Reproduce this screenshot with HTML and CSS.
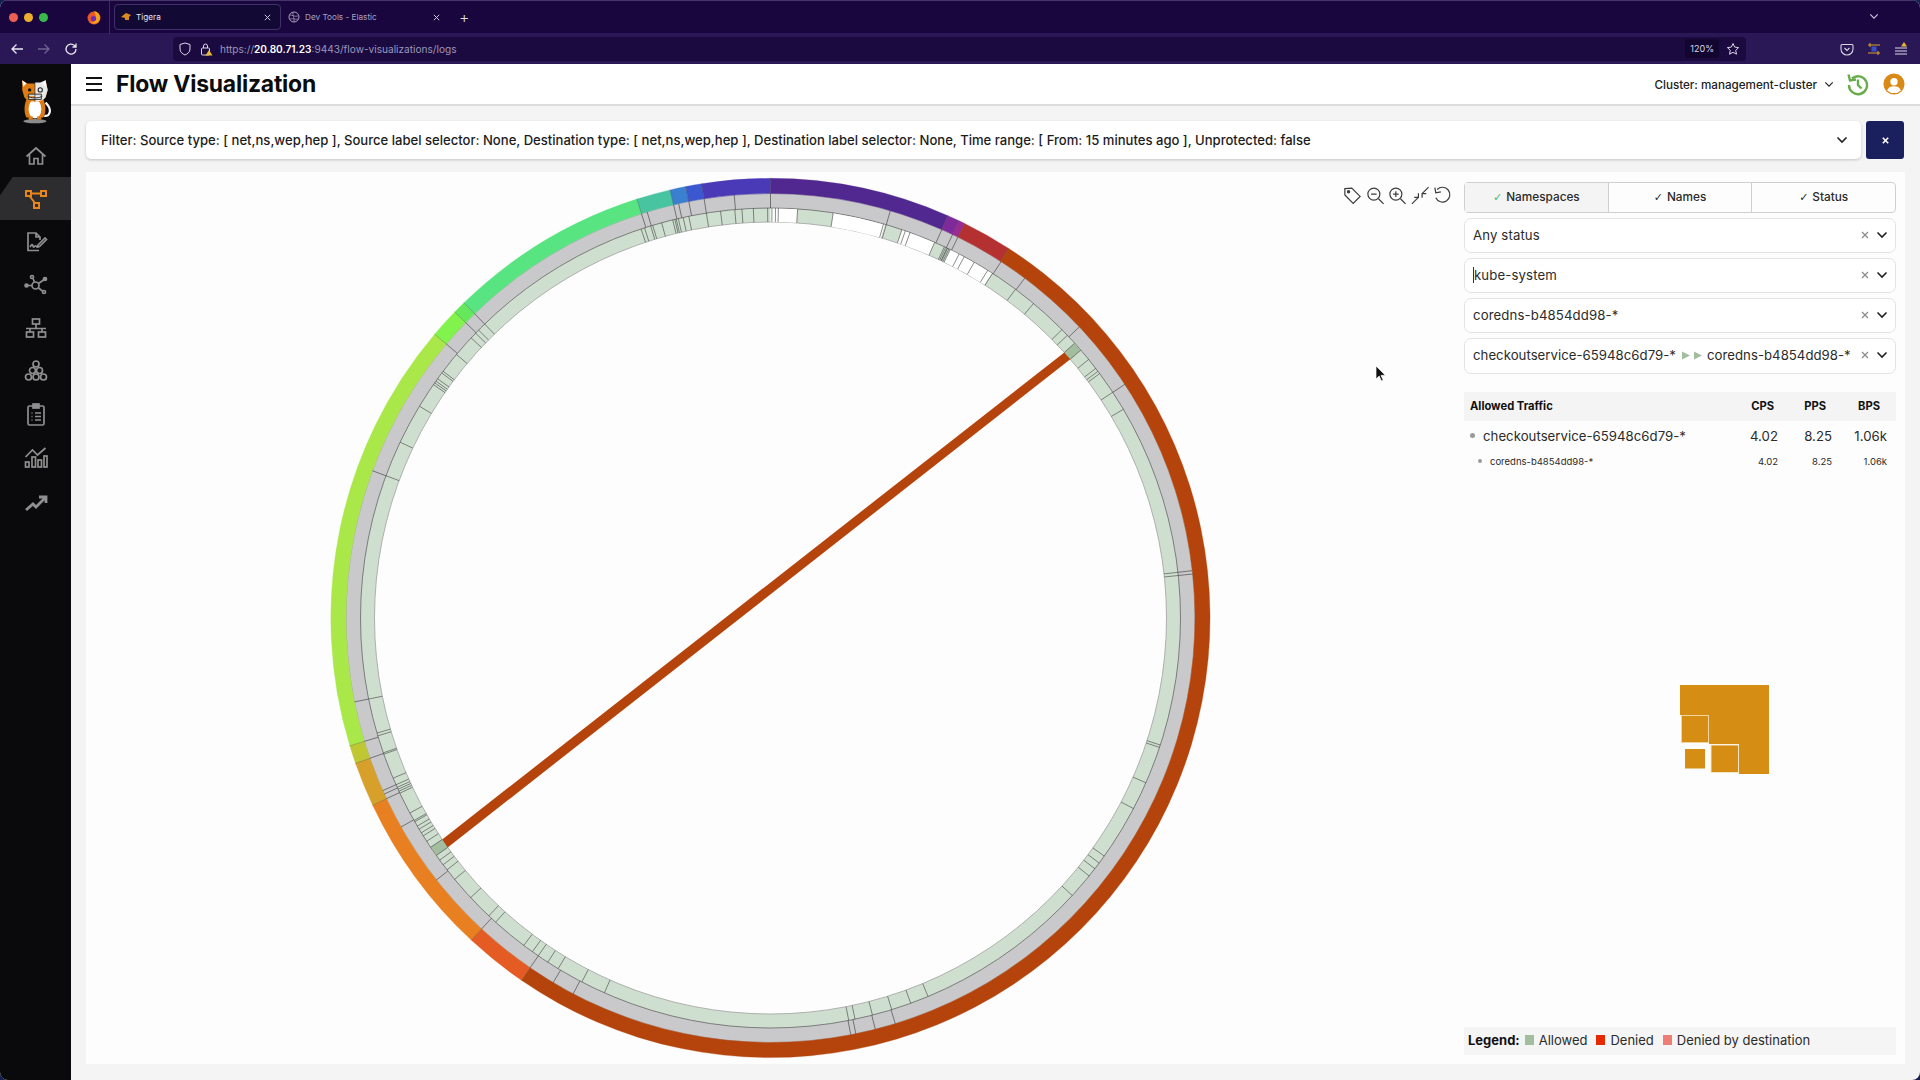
FILE: index.html
```html
<!DOCTYPE html>
<html lang="en">
<head>
<meta charset="utf-8">
<title>Tigera</title>
<link rel="stylesheet" href="styles.css">
</head>
<body>
<svg class="sprite" aria-hidden="true">
  <symbol id="i-x" viewBox="0 0 10 10"><path d="M2 2l6 6M8 2l-6 6"/></symbol>
  <symbol id="i-chev" viewBox="0 0 12 8"><path d="M1.5 1.5L6 6l4.5-4.5"/></symbol>
</svg>
<div class="window">
  <div class="tabbar">
    <div class="dots"><i class="dot red"></i><i class="dot yellow"></i><i class="dot green"></i></div>
    <div class="ff-slot">
      <svg class="ff" viewBox="0 0 16 16"><circle cx="8" cy="9" r="6.5" fill="#e8562a"/><path d="M8 2a7 7 0 0 1 6 7 6 6 0 0 1-11 3 4 4 0 0 0 7-3c0-2-1-5-2-7z" fill="#f6a21d"/><circle cx="7.5" cy="9.500" r="2.600" fill="#6b2fb5"/></svg>
    </div>
    <div class="tab active">
      <svg class="fav" viewBox="0 0 12 12"><path d="M1 6l5-4 5 2-2 2v3H5V7z" fill="#d88a1e"/></svg>
      <span class="tab-title">Tigera</span>
      <svg class="tab-x"><use href="#i-x"/></svg>
    </div>
    <div class="tab second">
      <svg class="fav" viewBox="0 0 12 12"><circle cx="6" cy="6" r="5" fill="none" stroke="#a9a3bd"/><path d="M2 4c3 0 4 2 8 1M2 8c3-1 5 1 8 0M5 1c-1 3 2 6 1 10" fill="none" stroke="#a9a3bd" stroke-width=".7"/></svg>
      <span class="tab-title dim">Dev Tools - Elastic</span>
      <svg class="tab-x"><use href="#i-x"/></svg>
    </div>
    <span class="new-tab">+</span>
    <svg class="tabs-chev"><use href="#i-chev"/></svg>
  </div>
  <div class="toolbar">
    <svg class="nav-ic" viewBox="0 0 16 16"><path d="M14 8H3M7.5 3.5L3 8l4.5 4.5"/></svg>
    <svg class="nav-ic off" viewBox="0 0 16 16"><path d="M2 8h11M8.500 3.500L13 8l-4.500 4.500"/></svg>
    <svg class="nav-ic" viewBox="0 0 16 16"><path d="M13 8a5 5 0 1 1-1.500-3.500L13 6M13 2.500V6H9.500"/></svg>
    <div class="urlbar">
      <svg class="url-ic" viewBox="0 0 14 14"><path d="M7 1l5 1.500V7c0 3-2.500 5-5 6-2.500-1-5-3-5-6V2.500z"/></svg>
      <svg class="url-ic" viewBox="0 0 14 14"><rect x="2.500" y="6" width="8" height="7" rx="1"/><path d="M4.500 6V4a2 2 0 0 1 4 0v2"/><path class="warn" d="M10 8l3.500 5.500h-7z"/></svg>
      <span class="url"><span class="dim2">https://</span><b>20.80.71.23</b><span class="dim2">:9443/flow-visualizations/logs</span></span>
      <span class="zoom-pct">120%</span>
      <svg class="url-ic star" viewBox="0 0 14 14"><path d="M7 1.500l1.700 3.600 3.900.5-2.900 2.700.8 3.900L7 10.300l-3.500 1.900.8-3.900-2.900-2.700 3.900-.5z"/></svg>
    </div>
    <svg class="tool-ic first" viewBox="0 0 14 14"><path d="M2 2.500h10a1 1 0 0 1 1 1V7a6 6 0 0 1-12 0V3.500a1 1 0 0 1 1-1z"/><path d="M4.500 6L7 8.500 9.500 6"/></svg>
    <svg class="tool-ic" viewBox="0 0 14 14"><path d="M1 3h12M1 11h12M3 1v4M11 9v4" stroke="#d9a02c"/><rect x="4.500" y="4.500" width="5" height="5" fill="#3a4fc0" stroke="none"/></svg>
    <svg class="tool-ic menu" viewBox="0 0 14 14"><path d="M1 6h12M1 9h12M1 12h12"/><path class="warn" d="M10 0l3 4.500H7z"/></svg>
  </div>
  <div class="app">
    <aside class="sidebar">
      <div class="logo">
        <svg viewBox="0 0 32 44" width="34" height="47">
          <ellipse cx="15" cy="41.500" rx="11" ry="2" fill="#8b8b8b"/>
          <path d="M25 24c4 4 5 8 3 11-1 1.500-3 2-4 1" fill="none" stroke="#fff" stroke-width="2"/>
          <path d="M8 19c-3 5-4 14-1 19h16c3-5 2-14-1-19z" fill="#de7a12"/>
          <ellipse cx="15" cy="30" rx="6" ry="9" fill="#fff"/>
          <path d="M3 3l5 3h12l5-3 2 9-2 7c-2 3-6 4-10 4s-8-1-10-4L3 12z" fill="#de7a12"/>
          <path d="M15 5h5l5-2 2 9-2 7c-2 3-6 4-10 4z" fill="#e8e8e8"/>
          <path d="M3 3l4 3-3 3zM25 3l-3 3 3 3z" fill="#fff"/>
          <circle cx="10" cy="12" r="1.600" fill="#111"/><circle cx="20" cy="12" r="2" fill="none" stroke="#222"/>
          <path d="M8 18c3 2 11 2 14 0M9 16h12v5H9z" fill="#ddd" stroke="#222" stroke-width=".8"/>
          <path d="M15 5v18" stroke="#222" stroke-width=".6"/>
          <rect x="9" y="37" width="4" height="3" fill="#de7a12"/><rect x="17" y="37" width="4" height="3" fill="#de7a12"/>
        </svg>
      </div>
      <nav class="nav">
        <a class="nav-item"><svg viewBox="0 0 24 24"><path d="M2.500 12.500L12 4l9.500 8.500M5.500 10.500V20H10v-5.500h4V20h4.500v-9.500"/></svg></a>
        <a class="nav-item current"><svg viewBox="0 0 24 24"><rect x="2" y="4" width="5" height="5"/><rect x="17" y="4" width="5" height="5"/><rect x="10" y="16" width="5" height="5"/><path d="M7 6.500h10M5.500 9l5.500 7"/></svg></a>
        <a class="nav-item"><svg viewBox="0 0 24 24"><path d="M15 20.500H4V3h8l4 4v3M12 3v4h4"/><path d="M6 17c2-3 2.500-3 3-1s1 1 2 0 1 1 3 1"/><path d="M14 15l7-7 1.500 1.500-7 7-2 .5z"/></svg></a>
        <a class="nav-item"><svg viewBox="0 0 24 24"><circle cx="11.500" cy="12.500" r="3.500"/><circle cx="8" cy="4" r="1.500"/><circle cx="21" cy="6" r="1.500" class="solid"/><circle cx="2.500" cy="12.500" r="1.500" class="solid"/><circle cx="20" cy="19" r="1.500"/><path d="M9 5.500l1.500 3.500M14.500 10.500l5-3.500M8 12.500H4M14.500 15l4 3"/></svg></a>
        <a class="nav-item"><svg viewBox="0 0 24 24"><rect x="8.500" y="3" width="7" height="5"/><rect x="2.500" y="16" width="7" height="5"/><rect x="14.500" y="16" width="7" height="5"/><path d="M12 8v4M2 12.500h20M6 12.500V16M18 12.500V16"/></svg></a>
        <a class="nav-item"><svg viewBox="0 0 24 24"><circle cx="12" cy="5" r="3"/><circle cx="8.500" cy="11.500" r="3"/><circle cx="15.500" cy="11.500" r="3"/><circle cx="4.500" cy="18" r="3"/><circle cx="12" cy="18" r="3"/><circle cx="19.500" cy="18" r="3"/></svg></a>
        <a class="nav-item"><svg viewBox="0 0 24 24"><rect x="4" y="4" width="16" height="19" rx="1.500"/><rect x="9" y="2" width="6" height="4" class="solid"/><path d="M7.500 11h1M11 11h6M7.500 14.500h1M11 14.500h6M7.500 18h1M11 18h6"/></svg></a>
        <a class="nav-item"><svg viewBox="0 0 24 24"><rect x="1.500" y="17" width="3.500" height="5"/><rect x="8" y="12" width="3.500" height="10"/><rect x="14" y="15" width="3.500" height="7"/><rect x="20" y="11" width="3" height="11"/><path d="M1.500 12l7-7 5 5 8-7"/></svg></a>
        <a class="nav-item last"><svg viewBox="0 0 24 24"><path class="thick" d="M2 19l7-6 3 3 9-9M15 6h7v6"/></svg></a>
      </nav>
    </aside>
    <main class="main">
      <header class="header">
        <div class="header-left">
          <div class="burger"><i></i><i></i><i></i></div>
          <h1 class="title">Flow Visualization</h1>
        </div>
        <div class="header-right">
          <span class="cluster">Cluster: management-cluster</span>
          <svg class="cluster-chev"><use href="#i-chev"/></svg>
          <svg class="history" viewBox="0 0 24 24"><path d="M6 6.500A9 9 0 1 1 3 13"/><path d="M2.500 2.500L4 8.500l6-1"/><path d="M12 7.500V13l3.500 3.500"/></svg>
          <svg class="user" viewBox="0 0 24 24"><circle cx="12" cy="12" r="11.500" fill="#d98a16"/><circle cx="12" cy="9.500" r="4" fill="#fff"/><path d="M4.500 19c1.500-3.500 4-4.500 7.500-4.500s6 1 7.500 4.500a11 11 0 0 1-15 0z" fill="#fff"/></svg>
        </div>
      </header>
      <section class="content">
        <div class="filter-row">
          <div class="filter">
            <span class="filter-text">Filter: Source type: [ net,ns,wep,hep ], Source label selector: None, Destination type: [ net,ns,wep,hep ], Destination label selector: None, Time range: [ From: 15 minutes ago ], Unprotected: false</span>
            <svg class="chev"><use href="#i-chev"/></svg>
          </div>
          <button class="filter-close"><svg><use href="#i-x"/></svg></button>
        </div>
        <div class="panel">
          <div class="chart-area">
            <svg id="chord" class="chord" viewBox="0 0 1369 892"></svg>
            <div class="chart-tools">
              <svg viewBox="0 0 20 20"><path d="M2 2.500l7.500-.5L18.500 11l-7.500 7.500L2 9.500z"/><circle cx="6" cy="6" r="1.200" class="solid"/></svg>
              <svg viewBox="0 0 20 20"><circle cx="8.500" cy="8.500" r="6.500"/><path d="M5.500 8.500h6M13.500 13.500L19 19"/></svg>
              <svg viewBox="0 0 20 20"><circle cx="8.500" cy="8.500" r="6.500"/><path d="M5.500 8.500h6M8.500 5.500v6M13.500 13.500L19 19"/></svg>
              <svg viewBox="0 0 20 20"><path d="M1 19l7-7M19 1l-7 7M8 7.500V12H3.500M12 12.500V8h4.500"/></svg>
              <svg viewBox="0 0 20 20"><path d="M4.500 3.500a8 8 0 1 1-1.500 9"/><path d="M2 1.500l1 5.500 5.500-1"/></svg>
            </div>
          </div>
          <div class="side">
            <div class="segments">
              <div class="segment on"><span class="check green-check">✓</span>Namespaces</div>
              <div class="segment"><span class="check">✓</span>Names</div>
              <div class="segment"><span class="check">✓</span>Status</div>
            </div>
            <div class="select"><span class="select-text">Any status</span><svg class="sel-x"><use href="#i-x"/></svg><svg class="chev"><use href="#i-chev"/></svg></div>
            <div class="select"><span class="select-text"><i class="caret"></i>kube-system</span><svg class="sel-x"><use href="#i-x"/></svg><svg class="chev"><use href="#i-chev"/></svg></div>
            <div class="select"><span class="select-text">coredns-b4854dd98-*</span><svg class="sel-x"><use href="#i-x"/></svg><svg class="chev"><use href="#i-chev"/></svg></div>
            <div class="select tall"><span class="select-text narrow">checkoutservice-65948c6d79-*</span><span class="arrows"><svg viewBox="0 0 9 9"><path d="M0 0l9 4.500L0 9z"/></svg><svg viewBox="0 0 9 9"><path d="M0 0l9 4.500L0 9z"/></svg></span><span class="select-text narrow grow">coredns-b4854dd98-*</span><svg class="sel-x"><use href="#i-x"/></svg><svg class="chev"><use href="#i-chev"/></svg></div>
            <div class="traffic">
              <div class="t-head"><span class="t-name">Allowed Traffic</span><span class="t-c1">CPS</span><span class="t-c2">PPS</span><span class="t-c3">BPS</span></div>
              <div class="t-row"><span class="t-name"><i class="t-dot"></i>checkoutservice-65948c6d79-*</span><span class="t-c1">4.02</span><span class="t-c2">8.25</span><span class="t-c3">1.06k</span></div>
              <div class="t-row sub"><span class="t-name"><i class="t-dot"></i>coredns-b4854dd98-*</span><span class="t-c1">4.02</span><span class="t-c2">8.25</span><span class="t-c3">1.06k</span></div>
            </div>
            <svg class="treemap" viewBox="0 0 90 90">
              <path class="tm-big" d="M0 0H89V89H59V59H29V30H0z"/>
              <rect class="tm-box" x="1.500" y="30.500" width="27" height="27"/>
              <rect class="tm-box white" x="31" y="60" width="27.500" height="27.500"/>
              <rect class="tm-small" x="5" y="64" width="20" height="19.500"/>
            </svg>
            <div class="legend">
              <b>Legend:</b>
              <i class="swatch allowed"></i><span>Allowed</span>
              <i class="swatch denied"></i><span>Denied</span>
              <i class="swatch bydest"></i><span>Denied by destination</span>
            </div>
          </div>
        </div>
      </section>
    </main>
  </div>
</div>
<script src="chart.js"></script>
</body>
</html>
```

FILE: styles.css
```css
* { box-sizing: border-box; }
html, body { margin: 0; height: 100%; overflow: hidden; }
body { background: #14204f; font-family: Inter, "Liberation Sans", sans-serif; color: #1a1a1a; }
.sprite { position: absolute; width: 0; height: 0; }
.window { height: 1080px; display: flex; flex-direction: column; border-radius: 8px; overflow: hidden; background: #f4f4f4; }

/* browser chrome */
.tabbar { height: 33px; flex: none; display: flex; align-items: center; background: #19063f; border-top: 1px solid #443468; position: relative; color: #fff; }
.dots { display: flex; gap: 6px; padding-left: 9px; width: 86px; }
.dot { width: 9px; height: 9px; border-radius: 50%; }
.dot.red { background: #ec5f52; }
.dot.yellow { background: #eeb02c; }
.dot.green { background: #39b94a; }
.ff-slot { width: 24px; height: 33px; display: flex; align-items: center; border-right: 1px solid #3c2a62; }
.ff { width: 16px; height: 16px; }
.tab { width: 167px; height: 26px; display: flex; align-items: center; padding: 0 8px 0 5px; gap: 4px; font-size: 8.200px; margin-left: 4px; border: 1px solid transparent; border-radius: 4px; }
.tab.second { padding: 0 10px 0 2px; gap: 5px; }
.tab.active { background: #120935; border-color: #42306c; }
.fav { width: 12px; height: 12px; flex: none; }
.tab-title { flex: 1; color: #e8e6f0; }
.tab-title.dim { color: #a9a3bd; }
.tab-x { width: 9px; height: 9px; fill: none; stroke: #d0cbe0; stroke-width: 1.1; flex: none; }
.new-tab { font-size: 16px; margin-left: 7px; color: #ddd; font-weight: 300; }
.tabs-chev { position: absolute; right: 41px; top: 12px; width: 10px; height: 7px; fill: none; stroke: #d0cbe0; stroke-width: 1.300; }
.toolbar { height: 31px; flex: none; display: flex; align-items: center; background: #2a1856; padding-left: 9px; }
.nav-ic { width: 16px; height: 16px; fill: none; stroke: #e9e6f2; stroke-width: 1.300; margin-right: 11px; flex: none; }
.nav-ic.off { stroke: #6e6390; }
.urlbar { width: 1573px; height: 24px; margin-left: 83px; background: #1a0a40; border-radius: 4px; display: flex; align-items: center; padding-left: 5px; color: #d9d6e6; flex: none; }
.url-ic { width: 14px; height: 14px; fill: none; stroke: #d9d6e6; stroke-width: 1; margin-right: 7px; flex: none; }
.url-ic .warn, .menu .warn { fill: #e8b931; stroke: none; }
.url { font-size: 10.100px; color: #fff; flex: 1; }
.url b { font-weight: 600; }
.dim2 { color: #9d96b8; }
.zoom-pct { font-size: 9px; background: #120630; padding: 4px 5px; border-radius: 2px; margin-right: 7px; }
.star { margin-right: 6px; }
.tool-ic { width: 14px; height: 14px; fill: none; stroke: #d9d6e6; stroke-width: 1.100; margin-left: 13px; flex: none; }
.tool-ic.first { margin-left: 94px; }

/* app */
.app { flex: 1; display: flex; min-height: 0; }
.sidebar { width: 71px; flex: none; background: #0a0a0c; }
.logo { height: 70px; display: flex; justify-content: center; padding-top: 13px; }
.nav { display: flex; flex-direction: column; }
.nav-item { height: 43px; display: flex; align-items: center; justify-content: center; }
.nav-item.last { padding-top: 6px; }
.nav-item svg { width: 24px; height: 24px; fill: none; stroke: #8f8f8f; stroke-width: 1.700; }
.nav-item .solid { fill: #8f8f8f; }
.nav-item .thick { stroke-width: 2.800; }
.nav-item.current { background: linear-gradient(125deg, #0a0a0c 10px, #2d2d2f 11px); }
.nav-item.current svg { stroke: #e8861a; stroke-width: 2; }
.main { flex: 1; display: flex; flex-direction: column; min-width: 0; }
.header { height: 42px; flex: none; background: #fff; border-bottom: 2px solid #dcdcdc; display: flex; justify-content: space-between; align-items: center; padding: 0 15px 0 15px; }
.header-left, .header-right { display: flex; align-items: center; }
.burger { width: 16px; display: flex; flex-direction: column; gap: 3.500px; margin-right: 14px; }
.burger i { height: 2.500px; background: #111; display: block; }
.title { margin: 0; font-size: 22.900px; font-weight: 700; color: #0c0c0c; letter-spacing: -.2px; }
.cluster { font-size: 11.650px; font-weight: 500; color: #222; padding-top: 1px; }
.cluster-chev { width: 10px; height: 7px; fill: none; stroke: #222; stroke-width: 1.400; margin: 0 12px 0 7px; }
.history { width: 24px; height: 24px; fill: none; stroke: #67ad4c; stroke-width: 2.400; margin-right: 13px; }
.user { width: 22px; height: 22px; }
.content { flex: 1; display: flex; flex-direction: column; padding: 15px 16px 0 15px; min-height: 0; }
.filter-row { display: flex; gap: 5px; height: 38px; flex: none; }
.filter { flex: 1; background: #fff; border-radius: 5px; box-shadow: 0 1px 3px rgba(0,0,0,.2); display: flex; align-items: center; justify-content: space-between; padding: 0 13px 0 15px; }
.filter-text { font-size: 13.080px; font-weight: 500; color: #1c1c1c; }
.chev { width: 12px; height: 8px; fill: none; stroke: #222; stroke-width: 1.600; flex: none; }
.filter-close { width: 38px; height: 38px; padding: 0; background: #1a1f5e; border: 0; border-radius: 3px; display: flex; align-items: center; justify-content: center; }
.filter-close svg { width: 9px; height: 9px; fill: none; stroke: #fff; stroke-width: 1.800; }
.panel { margin-top: 13px; height: 892px; flex: none; width: 1819px; background: #fdfdfd; display: flex; }
.chart-area { width: 1378px; flex: none; position: relative; }
.chord { display: block; width: 1369px; height: 892px; }
.chart-tools { position: absolute; top: 14px; left: 1257px; display: flex; gap: 4px; }
.chart-tools svg { width: 18.500px; height: 19px; fill: none; stroke: #3c3c3c; stroke-width: 1.300; }
.chart-tools .solid { fill: #3c3c3c; }
.side { width: 432px; flex: none; display: flex; flex-direction: column; padding-top: 10px; height: 100%; }
.segments { height: 31px; display: flex; border: 1px solid #cfcfcf; border-radius: 4px; flex: none; }
.segment { flex: 1; display: flex; align-items: center; justify-content: center; font-size: 11.800px; font-weight: 500; color: #2a2a2a; border-left: 1px solid #cfcfcf; padding-bottom: 1px; }
.segment:first-child { border-left: 0; }
.segment.on { background: #f4f4f4; }
.check { margin-right: 4px; font-family: "DejaVu Sans", sans-serif; font-size: 11px; }
.green-check { color: #3fbf6a; }
.select { height: 35px; margin-top: 5px; border: 1px solid #e3e3e6; border-radius: 7px; display: flex; align-items: center; padding: 0 7px 2px 8px; background: #fff; flex: none; }
.select.tall { height: 36px; }
.select-text { font-size: 13.200px; color: #2b2b2b; flex: 1; white-space: nowrap; letter-spacing: .12px; }
.select-text.narrow { flex: none; letter-spacing: .03px; }
.select-text.grow { flex: 1; }
.caret { display: inline-block; width: 1px; height: 16px; background: #333; vertical-align: -3px; }
.arrows { display: flex; gap: 4px; margin: 0 5px 0 6px; flex: none; }
.arrows svg { width: 8px; height: 9px; fill: #a3bd9f; }
.sel-x { width: 10px; height: 10px; fill: none; stroke: #8a8a8a; stroke-width: 1.200; flex: none; margin-right: 6px; }
.traffic { margin-top: 18px; flex: none; }
.t-head, .t-row { display: flex; align-items: center; }
.t-head { height: 29px; background: #f4f4f4; font-size: 11.200px; font-weight: 700; color: #111; padding: 0 0 1px 6px; }
.t-row { height: 31px; font-size: 13.200px; color: #2b2b2b; padding: 0 0 2px 6px; letter-spacing: .03px; }
.t-row.sub { height: 20px; font-size: 9.500px; letter-spacing: 0; padding-left: 14px; }
.t-name { flex: 1; display: flex; align-items: center; white-space: nowrap; }
.t-dot { width: 5px; height: 5px; border-radius: 50%; background: #9a9a9a; margin-right: 8px; flex: none; }
.sub .t-dot { width: 4px; height: 4px; }
.t-c1, .t-c2, .t-c3 { text-align: right; flex: none; }
.t-c1 { width: 45px; }
.t-c2 { width: 54px; }
.t-c3 { width: 55px; margin-right: 9px; }
.t-head .t-c1 { margin-right: 5px; width: 38px; }
.t-head .t-c2 { width: 47px; margin-right: 7px; }
.t-head .t-c3 { width: 47px; margin-right: 16px; }
.treemap { width: 90px; height: 90px; margin: 213px 0 0 216px; flex: none; display: block; }
.tm-big, .tm-small { fill: #d68d13; }
.tm-box { fill: #d68d13; stroke: #efd4a0; stroke-width: 1; }
.tm-box.white { stroke: #f7e6c6; }
.legend { margin-top: auto; margin-bottom: 9px; height: 28px; background: #f5f5f5; display: flex; align-items: center; padding: 0 0 2px 4px; font-size: 13px; color: #2b2b2b; flex: none; }
.legend b { font-weight: 700; color: #111; margin-right: 5px; }
.legend span { margin-right: 9px; }
.swatch { width: 9px; height: 10px; margin-right: 5px; flex: none; }
.allowed { background: #a3bd9f; }
.denied { background: #e62a00; }
.bydest { background: #ee7d74; }
```

FILE: chart.js
```js
var NS = 'http://www.w3.org/2000/svg';
var svg = document.getElementById('chord');
var CX = 684.5, CY = 446, R0 = 439.7, R1 = 424.5, R2 = 410, R3 = 396;

var OUTER = [[0,23.8,'#50288f'],[23.8,25.4,'#7f2a9a'],[25.4,26.2,'#9c2a94'],[26.2,32.8,'#b53030'],[32.8,214.5,'#b5440c'],[214.5,222.9,'#e45c23'],[222.9,244.8,'#e88021'],[244.8,250.7,'#d6a02a'],[250.7,253.1,'#bfc833'],[253.1,310.2,'#aae84a'],[310.2,314.1,'#82f24c'],[314.1,315.8,'#66e85c'],[315.8,342.3,'#58e480'],[342.3,346.8,'#48c4a0'],[346.8,348.9,'#3a7fd0'],[348.9,351,'#3c58d0'],[351,360,'#4a3ab8']];
var WHITE = [[0,3.8],[8.8,16.2],[18.7,23.6],[26,32.7]];
var GRAY_TICKS = [0,343.1,355.1,351,348.9,347.5,346.8,342.3,16.4,23.8,25.4,26.2,32.9,36.8,46.7,56.6,83.6,84.05,162.9,165.7,168.4,169.1,207.7,210.8,214.5,222.9,231.9,240.5,244.8,245.5,246,250.7,253.1,258.6,290.3,310.2,314.1,315.8];
var GREEN_TICKS = [0.2,0.7,1.1,3.8,8.8,16,16.4,18.7,19.2,19.9,23.6,25.1,25.3,25.5,25.6,25.8,26,27.4,28.2,29.8,32,32.8,36.7,39.9,45.3,46.4,47.9,49.2,50.9,52.5,53,53.4,56.6,59.4,83.6,84.05,108.05,108.4,113.7,117.7,125.5,126.7,127.7,129,132.6,157.4,160,162.8,165.6,168.1,169,203.9,207.4,211.2,212.9,214.5,215.5,217,222.1,223.4,227,230.4,232.1,233,233.8,234.6,236,237,237.9,238.4,239,239.5,240.2,240.4,241.6,244.7,245,245.3,245.6,246,247,250.6,250.8,253.3,253.7,258.6,290.3,295.4,301.1,304.7,305,305.3,305.7,306.7,307,310,313.1,314,314.6,315.8,341.6,342.1,343,343.3,344.6,346.2,346.5,346.7,347,347.7,348.5,351,353,355,356,357.6,359.6];

function pt(r, a) {
  var t = a * Math.PI / 180;
  return (CX + r * Math.sin(t)).toFixed(2) + ' ' + (CY - r * Math.cos(t)).toFixed(2);
}
function sector(r0, r1, a0, a1) {
  var big = a1 - a0 > 180 ? 1 : 0;
  return 'M' + pt(r0, a0) + 'A' + r0 + ' ' + r0 + ' 0 ' + big + ' 1 ' + pt(r0, a1) +
         'L' + pt(r1, a1) + 'A' + r1 + ' ' + r1 + ' 0 ' + big + ' 0 ' + pt(r1, a0) + 'Z';
}
function add(tag, attrs) {
  var el = document.createElementNS(NS, tag);
  for (var k in attrs) el.setAttribute(k, attrs[k]);
  svg.appendChild(el);
  return el;
}
function ring(r, fill, stroke, sw) {
  add('circle', { cx: CX, cy: CY, r: r, fill: fill, stroke: stroke, 'stroke-width': sw });
}
function tick(a, r0, r1, op) {
  add('path', { d: 'M' + pt(r0, a) + 'L' + pt(r1, a), stroke: '#3f3f3f', 'stroke-width': 0.8, 'stroke-opacity': op, fill: 'none' });
}

ring(R1, '#c9c9cc', '#8a8a8a', 0.6);
ring(R2, '#cfdfcf', '#666', 0.8);
ring(R3, '#fdfdfd', '#a0a0a0', 0.8);
WHITE.forEach(function (w) {
  add('path', { d: sector(R2 - 0.4, R3, w[0], w[1]), fill: '#fff' });
});
add('path', { d: sector(R2 - 0.4, R3, 47.9, 49.2), fill: '#a3bd9f' });
add('path', { d: sector(R2 - 0.4, R3, 234.6, 236), fill: '#a3bd9f' });
OUTER.forEach(function (s) {
  add('path', { d: sector(R0, R1, s[0], s[1]), fill: s[2], stroke: s[2], 'stroke-width': 0.3 });
});
OUTER.forEach(function (s) { tick(s[0], R0, R1, 0.4); });
GRAY_TICKS.forEach(function (a) { tick(a, R1, R2, 0.8); });
GREEN_TICKS.forEach(function (a) { tick(a, R2, R3, 0.75); });

add('path', {
  d: 'M' + pt(R3, 47.9) + 'L' + pt(R3, 49.2) + 'L' + pt(R3, 234.6) + 'L' + pt(R3, 236) + 'Z',
  fill: '#b5440c'
});
add('path', {
  d: 'M1290 194l0 13 3.200-3 2.200 5 1.800-.8-2.200-4.800 4.300-.2z',
  fill: '#111', stroke: '#fff', 'stroke-width': 0.7
});
```
